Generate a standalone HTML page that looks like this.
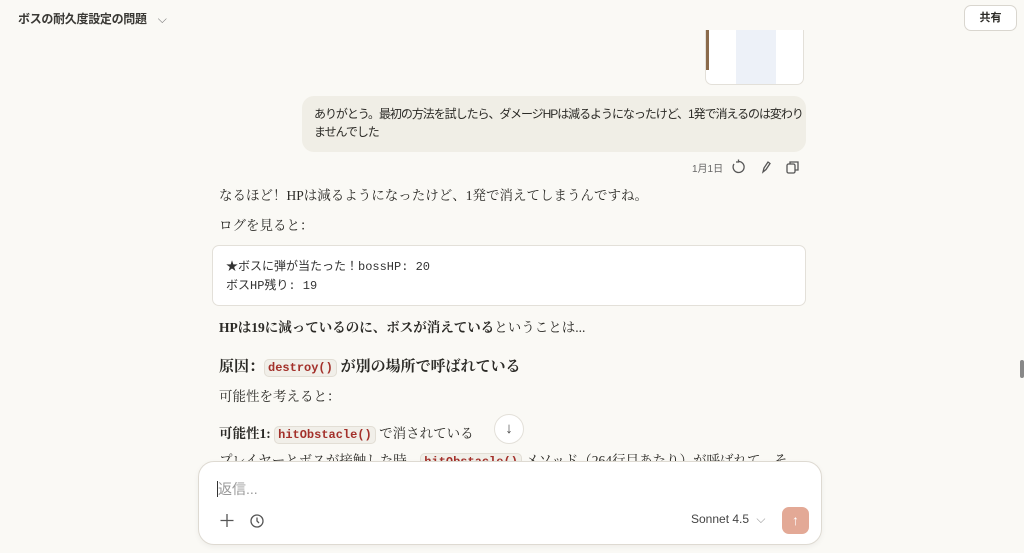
<!DOCTYPE html>
<html><head><meta charset="utf-8"><style>
*{margin:0;padding:0;box-sizing:border-box}
body{width:1024px;height:553px;overflow:hidden;background:#faf9f5;font-family:"Liberation Sans","Noto Sans CJK JP",sans-serif;color:#2b2a26;position:relative}
.abs{position:absolute}
.serif{font-family:"Liberation Serif","Noto Serif CJK SC",serif;font-size:13.5px;color:#2b2a26;white-space:nowrap}
code{font-family:"Liberation Mono","Noto Sans CJK JP",monospace;font-size:12px;color:#a3302a;background:#f1efe9;border:1px solid #e2ded5;border-radius:5px;padding:1px 3px;font-weight:bold}
</style></head><body>
<div class="abs" style="left:18px;top:10px;font-size:12px;font-weight:bold;color:#3a3935;letter-spacing:-0.3px">ボスの耐久度設定の問題 <span style="font-weight:normal;margin-left:8px;color:#777">⌵</span></div>
<div class="abs" style="left:964px;top:5px;width:53px;height:26px;border:1px solid #d9d6cf;border-radius:7px;background:#fff;font-size:11px;font-weight:bold;text-align:center;line-height:24px">共有</div>
<div class="abs" style="left:705px;top:30px;width:99px;height:55px;background:#fff;border:1px solid #e3e0d9;border-top:none;border-radius:0 0 7px 7px;overflow:hidden">
<div class="abs" style="left:0;top:0;width:3px;height:40px;background:#8a6a4a"></div>
<div class="abs" style="left:30px;top:0;width:40px;height:54px;background:#edf1f8"></div>
</div>
<div class="abs" style="left:302px;top:96px;width:504px;height:56px;background:#f0eee6;border-radius:12px;padding:9px 4px 9px 12px;font-size:12px;line-height:18px;color:#2b2a26;letter-spacing:-1.05px;white-space:nowrap">ありがとう。最初の方法を試したら、ダメージHPは減るようになったけど、1発で消えるのは変わり<br>ませんでした</div>
<div class="abs" style="left:692px;top:160px;font-size:10px;color:#666">1月1日</div>
<svg class="abs" style="left:730px;top:159px" width="75" height="16" fill="none" stroke="#555" stroke-width="1.3"><path d="M4 5a5.5 5.5 0 1 0 4.5-2.5M8.5 0.5v2.5H6"/><path d="M33 13l1-4 4-6 2 1.5-4 6z"/><rect x="57" y="5" width="8" height="9" rx="1.5"/><path d="M60 5V3h8v8h-3"/></svg>
<div class="abs serif" style="left:219px;top:184px">なるほど！HPは減るようになったけど、1発で消えてしまうんですね。</div>
<div class="abs serif" style="left:219px;top:214px">ログを見ると：</div>
<div class="abs" style="left:212px;top:245px;width:594px;height:61px;background:#fff;border:1px solid #e3e0d9;border-radius:7px;padding:12px 13px;font-family:'Liberation Mono','Noto Sans CJK JP',monospace;font-size:12px;line-height:19px;color:#333">★ボスに弾が当たった！bossHP: 20<br>ボスHP残り: 19</div>
<div class="abs serif" style="left:219px;top:316px"><b>HPは19に減っているのに、ボスが消えている</b>ということは...</div>
<div class="abs serif" style="left:219px;top:355px;font-size:15px;font-weight:bold">原因：<code>destroy()</code> が別の場所で呼ばれている</div>
<div class="abs serif" style="left:219px;top:385px">可能性を考えると：</div>
<div class="abs serif" style="left:219px;top:422px"><b>可能性1:</b> <code>hitObstacle()</code> で消されている</div>
<div class="abs serif" style="left:219px;top:449px">プレイヤーとボスが接触した時、<code>hitObstacle()</code> メソッド（264行目あたり）が呼ばれて、そ</div>
<div class="abs" style="left:494px;top:414px;width:30px;height:30px;border-radius:50%;background:#fff;border:1px solid #e3e0d9;text-align:center;line-height:28px;font-size:15px;color:#444">↓</div>
<div class="abs" style="left:198px;top:461px;width:624px;height:84px;background:#fff;border:1px solid #dedad2;border-radius:16px;box-shadow:0 2px 6px rgba(0,0,0,.05)">
<div class="abs" style="left:18px;top:17px;font-size:14px;color:#999"><span style="border-left:1px solid #333"></span>返信...</div>
<svg class="abs" style="left:20px;top:50px" width="60" height="18" fill="none" stroke="#555" stroke-width="1.3"><path d="M8 2v13M1.5 8.5h13"/><circle cx="38" cy="9" r="6"/><path d="M38 5.5V9l2 2"/></svg>
<div class="abs" style="left:492px;top:50px;font-size:12px;color:#444">Sonnet 4.5 <span style="color:#999;margin-left:4px">⌵</span></div>
<div class="abs" style="left:583px;top:45px;width:27px;height:27px;border-radius:7px;background:#e3a996;color:#fff;text-align:center;line-height:26px;font-size:14px">↑</div>
</div>
<div class="abs" style="left:1020px;top:360px;width:4px;height:18px;background:#888;border-radius:2px"></div>
</body></html>
